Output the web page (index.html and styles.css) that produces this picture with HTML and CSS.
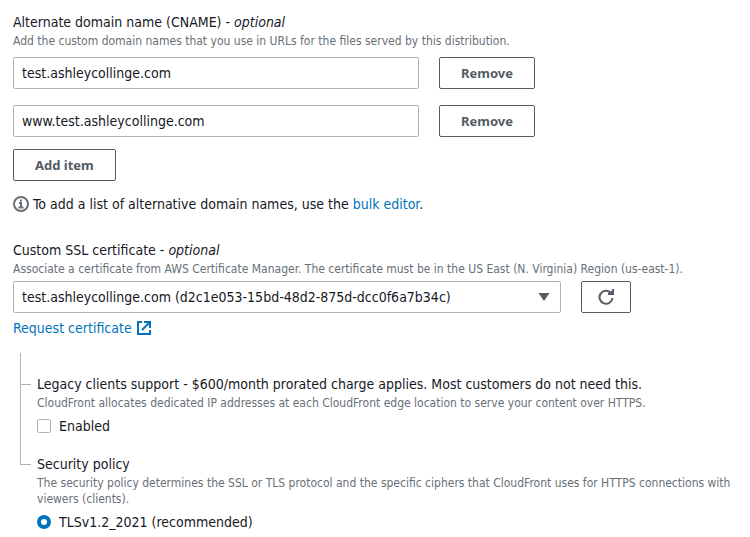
FILE: index.html
```html
<!DOCTYPE html>
<html lang="en">
<head>
<meta charset="utf-8">
<title>Distribution settings</title>
<link rel="stylesheet" href="styles.css">
</head>
<body>
<main class="form">
  <section class="field" aria-labelledby="cname-title">
    <h2 class="label" id="cname-title">Alternate domain name (CNAME) - <i>optional</i></h2>
    <p class="hint">Add the custom domain names that you use in URLs for the files served by this distribution.</p>
    <div class="domains">
      <div class="row">
        <input class="control" type="text" value="test.ashleycollinge.com" aria-label="Domain name 1">
        <button class="button" type="button">Remove</button>
      </div>
      <div class="row">
        <input class="control" type="text" value="www.test.ashleycollinge.com" aria-label="Domain name 2">
        <button class="button" type="button">Remove</button>
      </div>
    </div>
    <button class="button add" type="button">Add item</button>
    <p class="note">
      <svg class="icon" viewBox="0 0 16 16" aria-hidden="true"><circle cx="8" cy="8" r="7"/><path d="M6 7h2v4.500M5.500 11.500h5M7 4.500h2"/></svg>
      <span>To add a list of alternative domain names, use the <a href="#">bulk editor</a>.</span>
    </p>
  </section>

  <section class="field">
    <label class="label" for="certificate">Custom SSL certificate - <i>optional</i></label>
    <p class="hint">Associate a certificate from AWS Certificate Manager. The certificate must be in the US East (N. Virginia) Region (us-east-1).</p>
    <div class="row certificate">
      <div class="select">
        <select class="control" id="certificate">
          <option>test.ashleycollinge.com (d2c1e053-15bd-48d2-875d-dcc0f6a7b34c)</option>
        </select>
        <svg class="arrow" viewBox="0 0 12 8" aria-hidden="true"><path d="M0.500 0h11L6 8z"/></svg>
      </div>
      <button class="button refresh" type="button" aria-label="Refresh certificates">
        <svg class="icon" viewBox="0 0 16 16" aria-hidden="true"><path d="M14.500 9A6.500 6.500 0 1 1 12.500 3.500L14 5"/><path d="M10 5h5V0"/><path class="solid" d="M12 5l3-3v3z"/></svg>
      </button>
    </div>
    <a class="request" href="#">Request certificate
      <svg class="icon" viewBox="0 0 16 16" aria-hidden="true"><path d="M8 2h6v6M6 10l8-8M14 10v4H2V2h4"/></svg>
    </a>
  </section>

  <div class="tree">
    <section class="branch" aria-labelledby="legacy-title">
      <h2 class="label" id="legacy-title">Legacy clients support - $600/month prorated charge applies. Most customers do not need this.</h2>
      <p class="hint">CloudFront allocates dedicated IP addresses at each CloudFront edge location to serve your content over HTTPS.</p>
      <label class="choice"><input class="box" type="checkbox">Enabled</label>
    </section>
    <section class="branch" aria-labelledby="policy-title">
      <h2 class="label" id="policy-title">Security policy</h2>
      <p class="hint">The security policy determines the SSL or TLS protocol and the specific ciphers that CloudFront uses for HTTPS connections with viewers (clients).</p>
      <label class="choice"><input class="radio" type="radio" name="policy" checked>TLSv1.2_2021 (recommended)</label>
    </section>
  </div>
</main>
</body>
</html>
```

FILE: styles.css
```css
* {
  box-sizing: border-box;
}

body {
  margin: 0;
  background: #fff;
  color: #16191f;
  font: 14px/22px "DejaVu Sans Condensed", "Open Sans", sans-serif;
}

.form {
  padding: 11px 13px 4px;
}

.label {
  display: block;
  margin: 0;
  font-size: 14px;
  font-weight: 400;
  line-height: 22px;
}

.hint {
  margin: 0;
  color: #687078;
  font-size: 12px;
  line-height: 16px;
}

a {
  color: #0073bb;
  text-decoration: none;
}

.domains {
  display: grid;
  gap: 16px;
  margin: 8px 0 12px;
}

.row {
  display: flex;
  gap: 20px;
}

.row > .control {
  flex: 0 1 406px;
}

.control {
  min-width: 0;
  height: 32px;
  padding: 4px 8px;
  border: 1px solid #aab7b8;
  border-radius: 2px;
  background: #fff;
  color: inherit;
  font: inherit;
}

.button {
  height: 32px;
  padding: 4px 21px;
  border: 1px solid #545b64;
  border-radius: 2px;
  background: #fff;
  color: #545b64;
  font: 700 13px/22px "Noto Sans", "Open Sans", sans-serif;
}

.icon {
  width: 16px;
  height: 16px;
  fill: none;
  stroke: currentColor;
  stroke-width: 2;
}

.solid {
  fill: currentColor;
}

.note {
  display: flex;
  align-items: center;
  gap: 4px;
  margin: 12px 0 0;
}

.note .icon {
  color: #687078;
}

.field + .field {
  margin-top: 24px;
}

.certificate {
  margin: 4px 0;
}

.select {
  position: relative;
  flex: 0 1 548px;
}

.select .control {
  display: block;
  width: 100%;
  appearance: none;
}

.arrow {
  position: absolute;
  top: 12px;
  right: 11px;
  width: 12px;
  height: 8px;
  fill: #545b64;
  pointer-events: none;
}

.refresh {
  display: flex;
  align-items: center;
  padding: 4px 16px;
}

.request {
  display: flex;
  width: fit-content;
  align-items: center;
  gap: 4px;
}

.tree {
  margin: 14px 0 0 7px;
}

.branch {
  position: relative;
  padding: 20px 0 0 17px;
}

.branch + .branch {
  padding-top: 16px;
}

.branch::before {
  content: "";
  position: absolute;
  top: 0;
  left: 0;
  width: 10px;
  height: 31px;
  border: solid #aab7b8;
  border-width: 0 0 1px 1px;
}

.branch + .branch::before {
  height: 27px;
}

.branch:not(:last-child)::after {
  content: "";
  position: absolute;
  top: 0;
  bottom: 0;
  left: 0;
  border-left: 1px solid #aab7b8;
}

.choice {
  display: flex;
  align-items: center;
  gap: 8px;
  margin-top: 4px;
}

.box,
.radio {
  width: 14px;
  height: 14px;
  margin: 0;
  border: 1px solid #aab7b8;
  border-radius: 2px;
  appearance: none;
}

.radio {
  border-radius: 50%;
}

.radio:checked {
  border: 4px solid #0073bb;
}
```
